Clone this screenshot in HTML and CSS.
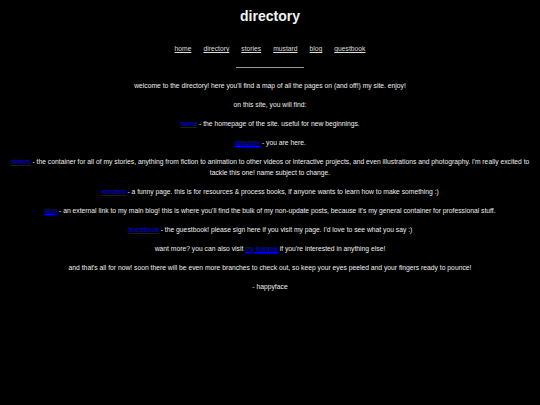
FILE: index.html
```html
<!DOCTYPE html>
<html>
<head>
<meta charset="utf-8">
<title>directory</title>
<link rel="stylesheet" href="styles.css">
</head>
<body>
<header class="header">
  <h1 class="title">directory</h1>
  <nav class="nav">
    <a href="#">home</a>
    <a href="#">directory</a>
    <a href="#">stories</a>
    <a href="#">mustard</a>
    <a href="#">blog</a>
    <a href="#">guestbook</a>
  </nav>
  <div class="rule"></div>
</header>
<main class="content">
  <p>welcome to the directory! here you'll find a map of all the pages on (and off!) my site. enjoy!</p>
  <p>on this site, you will find:</p>
  <p><a class="link" href="#">home</a> - the homepage of the site. useful for new beginnings.</p>
  <p><a class="link" href="#">directory</a> - you are here.</p>
  <p><a class="link" href="#">stories</a> - the container for all of my stories, anything from fiction to animation to other videos or interactive projects, and even illustrations and photography. i'm really excited to tackle this one! name subject to change.</p>
  <p><a class="link" href="#">mustard</a> - a funny page. this is for resources &amp; process books, if anyone wants to learn how to make something :)</p>
  <p><a class="link" href="#">blog</a> - an external link to my main blog! this is where you'll find the bulk of my non-update posts, because it's my general container for professional stuff.</p>
  <p><a class="link" href="#">guestbook</a> - the guestbook! please sign here if you visit my page. I'd love to see what you say :)</p>
  <p>want more? you can also visit <a class="link" href="#">my linktree</a> if you're interested in anything else!</p>
  <p>and that's all for now! soon there will be even more branches to check out, so keep your eyes peeled and your fingers ready to pounce!</p>
  <p>- happyface</p>
</main>
</body>
</html>
```
FILE: styles.css
```css
html, body {
  margin: 0;
  padding: 0;
  background: #000;
}
body {
  font-family: "Liberation Sans", Arial, sans-serif;
  color: #eeeeee;
  font-size: 6.75px;
  line-height: 10.4px;
  text-align: center;
}
.header {
  display: flex;
  flex-direction: column;
  align-items: center;
  padding-top: 8px;
}
.title {
  margin: 0;
  font-size: 14px;
  line-height: 16px;
  font-weight: bold;
  color: #f2f2f2;
}
.nav {
  display: flex;
  gap: 12px;
  margin-top: 20px;
}
.nav a {
  color: #dddddd;
  text-decoration: underline;
}
.rule {
  width: 68px;
  height: 1px;
  background: #999;
  margin-top: 13px;
}
.content {
  padding: 13px 8px 0;
}
.content p {
  margin: 0 0 8.6px;
}
.link {
  color: #0000ee;
  text-decoration: underline;
}
```
